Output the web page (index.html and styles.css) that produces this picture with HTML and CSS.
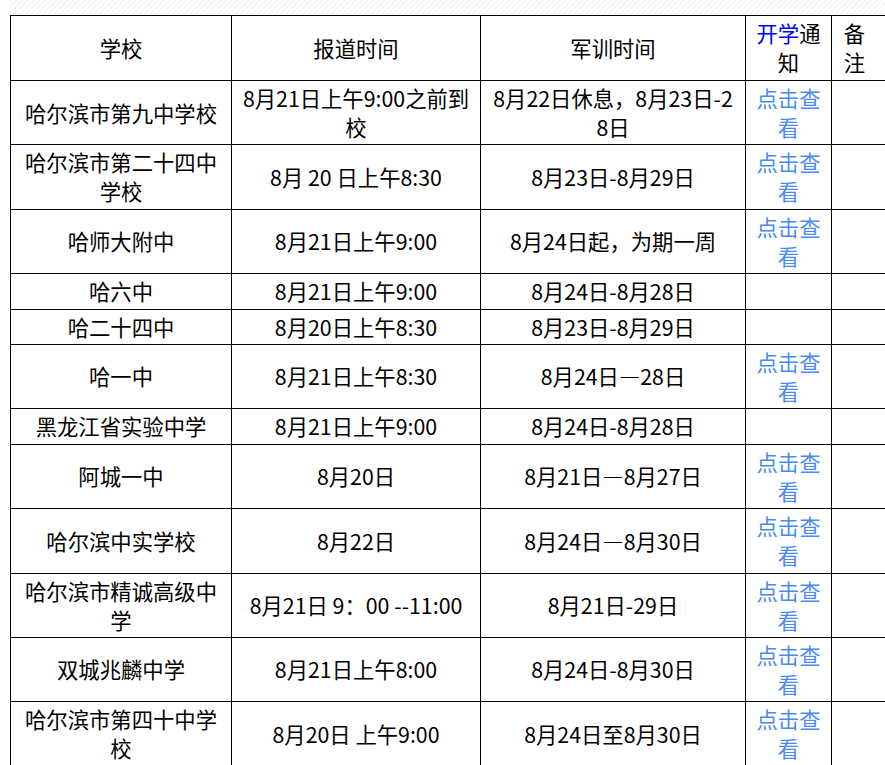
FILE: index.html
```html
<!DOCTYPE html>
<html lang="zh-CN">
<head>
<meta charset="utf-8">
<title>学校报到时间</title>
<link rel="stylesheet" href="styles.css">
</head>
<body>
<div class="page">
  <div class="hatch"></div>
  <table class="sched">
    <colgroup>
      <col class="c-school"><col class="c-report"><col class="c-train"><col class="c-notice"><col class="c-note">
    </colgroup>
    <thead>
      <tr><th>学校</th><th>报道时间</th><th>军训时间</th><th><span class="blue">开学</span>通知</th><th class="note">备注</th></tr>
    </thead>
    <tbody>
      <tr><td>哈尔滨市第九中学校</td><td>8月21日上午9:00之前到校</td><td>8月22日休息，8月23日-28日</td><td><a href="#">点击查看</a></td><td class="note"></td></tr>
      <tr><td>哈尔滨市第二十四中学校</td><td>8月 20 日上午8:30</td><td>8月23日-8月29日</td><td><a href="#">点击查看</a></td><td class="note"></td></tr>
      <tr><td>哈师大附中</td><td>8月21日上午9:00</td><td>8月24日起，为期一周</td><td><a href="#">点击查看</a></td><td class="note"></td></tr>
      <tr><td>哈六中</td><td>8月21日上午9:00</td><td>8月24日-8月28日</td><td></td><td class="note"></td></tr>
      <tr><td>哈二十四中</td><td>8月20日上午8:30</td><td>8月23日-8月29日</td><td></td><td class="note"></td></tr>
      <tr><td>哈一中</td><td>8月21日上午8:30</td><td>8月24日—28日</td><td><a href="#">点击查看</a></td><td class="note"></td></tr>
      <tr><td>黑龙江省实验中学</td><td>8月21日上午9:00</td><td>8月24日-8月28日</td><td></td><td class="note"></td></tr>
      <tr><td>阿城一中</td><td>8月20日</td><td>8月21日—8月27日</td><td><a href="#">点击查看</a></td><td class="note"></td></tr>
      <tr><td>哈尔滨中实学校</td><td>8月22日</td><td>8月24日—8月30日</td><td><a href="#">点击查看</a></td><td class="note"></td></tr>
      <tr><td>哈尔滨市精诚高级中学</td><td>8月21日 9：00 --11:00</td><td>8月21日-29日</td><td><a href="#">点击查看</a></td><td class="note"></td></tr>
      <tr><td>双城兆麟中学</td><td>8月21日上午8:00</td><td>8月24日-8月30日</td><td><a href="#">点击查看</a></td><td class="note"></td></tr>
      <tr><td>哈尔滨市第四十中学校</td><td>8月20日 上午9:00</td><td>8月24日至8月30日</td><td><a href="#">点击查看</a></td><td class="note"></td></tr>
    </tbody>
  </table>
</div>
</body>
</html>
```
FILE: styles.css
```css
html, body {
  margin: 0;
  padding: 0;
  overflow: hidden;
  background: #fff;
}
.page {
  padding-left: 10px;
  width: 900px;
}
.hatch {
  height: 15px;
  background: repeating-linear-gradient(135deg, #f7f7f7 0 2px, #ffffff 2px 4px);
}
.sched {
  border-collapse: collapse;
  table-layout: fixed;
  width: 880px;
  font-family: "Noto Sans CJK SC", "Noto Sans", sans-serif;
  font-size: 21.33px;
  line-height: 29px;
  color: #000;
}
.c-school { width: 221px; }
.c-report { width: 249px; }
.c-train { width: 265px; }
.c-notice { width: 86px; }
.c-note { width: 59px; }
.sched th, .sched td {
  border: 1px solid #000;
  padding: 2px 7px 3.4px;
  text-align: center;
  vertical-align: middle;
  font-weight: normal;
  word-break: break-all;
}
.sched thead th {
  padding-top: 2px;
  padding-bottom: 4px;
}
.sched .note {
  padding-left: 7px;
  padding-right: 20px;
}
.blue { color: #0000ff; }
.sched a {
  color: #4a8af4;
  text-decoration: none;
}
```
